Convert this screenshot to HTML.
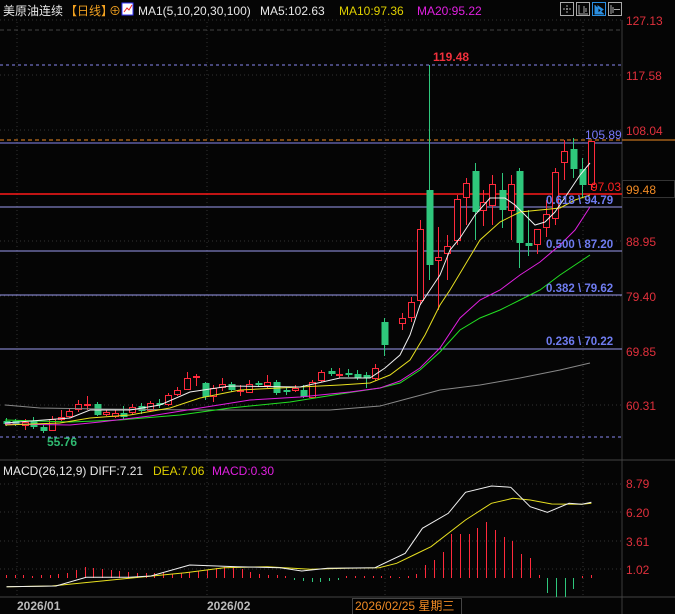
<!DOCTYPE html>
<html><head><meta charset="utf-8"><style>
html,body{margin:0;padding:0;background:#000;width:675px;height:614px;overflow:hidden}
svg{display:block}
text{font-family:"Liberation Sans","Noto Sans CJK SC",sans-serif}
</style></head><body>
<svg id="s" width="675" height="614" xmlns="http://www.w3.org/2000/svg">
<rect width="675" height="614" fill="#050505"/>
<g stroke="#333" stroke-dasharray="1,3" stroke-width="1">
<line x1="0" y1="20" x2="622" y2="20"/>
<line x1="0" y1="75" x2="622" y2="75"/>
<line x1="0" y1="130" x2="622" y2="130"/>
<line x1="0" y1="241" x2="622" y2="241"/>
<line x1="0" y1="296" x2="622" y2="296"/>
<line x1="0" y1="405" x2="622" y2="405"/>
<line x1="0" y1="484" x2="622" y2="484"/>
<line x1="0" y1="512" x2="622" y2="512"/>
<line x1="0" y1="541" x2="622" y2="541"/>
<line x1="0" y1="569" x2="622" y2="569"/>
<line x1="17" y1="22" x2="17" y2="597"/>
<line x1="207" y1="22" x2="207" y2="597"/>
<line x1="385" y1="22" x2="385" y2="597"/>
<line x1="583" y1="22" x2="583" y2="597"/>
</g>
<line x1="622" y1="20" x2="622" y2="614" stroke="#3a3a3a"/>
<line x1="0" y1="460" x2="675" y2="460" stroke="#444"/>
<line x1="0" y1="597" x2="675" y2="597" stroke="#444"/>
<line x1="0" y1="30" x2="622" y2="30" stroke="#444" stroke-dasharray="4,3"/>
<!-- key lines -->
<line x1="0" y1="65" x2="622" y2="65" stroke="#8888ee" stroke-dasharray="3,3"/>
<line x1="0" y1="140" x2="675" y2="140" stroke="#f08a24" stroke-dasharray="4,3"/>
<line x1="622" y1="140" x2="675" y2="140" stroke="#f08a24"/>
<line x1="0" y1="143" x2="622" y2="143" stroke="#8888ee"/>
<line x1="0" y1="194" x2="622" y2="194" stroke="#ff1a1a" stroke-width="1.5"/>
<line x1="0" y1="207" x2="622" y2="207" stroke="#9a9aee"/>
<line x1="0" y1="251" x2="622" y2="251" stroke="#9a9aee"/>
<line x1="0" y1="295" x2="622" y2="295" stroke="#9a9aee"/>
<line x1="0" y1="349" x2="622" y2="349" stroke="#9a9aee"/>
<line x1="0" y1="437" x2="622" y2="437" stroke="#8888ee" stroke-dasharray="3,3"/>
<g id="cnd"></g>
<g id="mas" fill="none" stroke-width="1"></g>
<g id="macd"></g>
<!-- texts -->
<g font-size="12">
<text x="3" y="15" fill="#e8e8e8">美原油连续</text>
<text x="65" y="15" fill="#f0a020">【日线】</text>
<text x="109" y="15" fill="#f0a020">⊕</text>
<rect x="122" y="3" width="11" height="12" fill="#fff" stroke="#33f"/>
<path d="M124 12 L127 8 L129 10 L132 5" stroke="#e22" fill="none"/>
<text x="138" y="15" fill="#e8e8e8">MA1(5,10,20,30,100)</text>
<text x="260" y="15" fill="#e8e8e8">MA5:102.63</text>
<text x="339" y="15" fill="#e0d000">MA10:97.36</text>
<text x="417" y="15" fill="#e020e0">MA20:95.22</text>
</g>
<g stroke="#aaa" fill="none">
<rect x="560.5" y="2.5" width="13" height="13"/>
<rect x="576.5" y="2.5" width="13" height="13"/>
<rect x="592.5" y="2.5" width="13" height="13" stroke="#2a8ee0"/>
<rect x="608.5" y="2.5" width="13" height="13"/>
<path d="M567 5v9M563 9h9" stroke-dasharray="2,1"/>
<path d="M579 5v9h9M584 6v7M586 8v4"/>
<path d="M595 5v9h9M598 6l5 3.5-5 3.5z" stroke="#2a8ee0" fill="#2a8ee0"/>
<path d="M611 5v9M613 7v6M614 9.5h6"/>
</g>
<g font-size="12" fill="#e0303c">
<text x="626" y="25">127.13</text>
<text x="626" y="80">117.58</text>
<text x="626" y="135">108.04</text>
<text x="626" y="246">88.95</text>
<text x="626" y="301">79.40</text>
<text x="626" y="356">69.85</text>
<text x="626" y="410">60.31</text>
<text x="626" y="488">8.79</text>
<text x="626" y="517">6.20</text>
<text x="626" y="546">3.61</text>
<text x="626" y="574">1.02</text>
</g>
<rect x="622.5" y="180.5" width="52" height="17" fill="#000" stroke="#333"/>
<text x="626" y="194" font-size="12" fill="#f08a24">99.48</text>
<g font-size="12" font-weight="bold">
<text x="433" y="61" fill="#f0303c">119.48</text>
<text x="47" y="446" fill="#2fb870">55.76</text>
</g>
<g font-size="12">
<text x="585" y="139" fill="#7a7aff">105.89</text>
<text x="591" y="191" fill="#ff2020">97.03</text>
</g>
<g font-size="11.5" font-weight="bold" fill="#6f7cf0">
<text x="546" y="204">0.618 \ 94.79</text>
<text x="546" y="248">0.500 \ 87.20</text>
<text x="546" y="292">0.382 \ 79.62</text>
<text x="546" y="345">0.236 \ 70.22</text>
</g>
<g font-size="12">
<text x="3" y="475" fill="#e8e8e8">MACD(26,12,9) DIFF:7.21</text>
<text x="153" y="475" fill="#e0d000">DEA:7.06</text>
<text x="212" y="475" fill="#e020e0">MACD:0.30</text>
</g>
<g font-size="12" fill="#bbb" font-weight="bold">
<text x="17" y="610">2026/01</text>
<text x="207" y="610">2026/02</text>
</g>
<rect x="352.5" y="598.5" width="109" height="16" fill="#000" stroke="#444"/>
<text x="355" y="610" font-size="12" fill="#f08a24">2026/02/25 星期三</text>
</svg>
<script>
var NS="http://www.w3.org/2000/svg";
function el(t,a,p){var e=document.createElementNS(NS,t);for(var k in a)e.setAttribute(k,a[k]);p.appendChild(e);return e;}
var R="#ff2a3c",G="#2fc77c";
// x, top, bottom, red?, wickTop, wickBot
var c=[[6,421,424,0,418,426],[15,421,424,0,419,426],[25,422,425,1,419,430],[33,421,427,0,417,429],[43,427,431,0,425,433],[52,419,430,1,416,431],[61,417,419,1,410,421],[69,411,416,1,408,418],[78,404,409,1,400,412],[87,404,405,1,396,410],[97,404,415,0,402,416],[106,412,414,1,409,416],[115,413,416,1,410,418],[123,413,417,0,406,419],[132,407,412,1,404,414],[141,406,411,0,403,414],[150,403,410,1,401,412],[159,403,405,0,399,408],[168,395,404,1,393,406],[177,390,394,1,387,396],[187,378,389,1,372,390],[196,376,377,1,374,386],[205,383,397,0,382,400],[213,388,396,1,385,402],[222,384,387,1,378,391],[231,384,390,0,382,392],[240,390,391,1,385,396],[249,384,392,1,380,393],[258,383,385,0,381,387],[267,382,385,1,375,388],[276,382,393,0,380,395],[286,390,391,0,387,395],[295,388,390,1,385,392],[303,390,397,0,385,398],[312,382,397,1,380,398],[321,372,380,1,370,382],[331,371,374,0,368,376],[339,374,375,1,368,378],[348,373,374,0,369,377],[357,374,378,0,370,380],[366,375,378,0,372,388],[375,368,378,1,364,381],[384,322,345,0,318,356],[402,318,323,1,313,330],[411,302,317,1,297,322],[420,229,300,1,220,305],[429,190,265,0,65,280],[438,257,260,1,227,310],[447,246,253,1,235,280],[457,199,240,1,195,245],[466,183,197,1,178,225],[475,171,212,0,163,240],[483,202,210,1,190,226],[492,184,205,1,175,225],[502,190,210,0,173,228],[511,184,210,1,175,240],[519,171,243,0,168,268],[528,243,246,0,210,256],[537,229,244,1,229,254],[546,214,227,1,200,237],[555,172,218,1,168,225],[564,151,162,1,140,180],[573,149,169,0,138,178],[582,169,185,0,158,198],[591,141,184,1,141,190]];
var g=document.getElementById("cnd");
c.forEach(function(d){var col=d[3]?R:G;
el("line",{x1:d[0]+.5,y1:d[4],x2:d[0]+.5,y2:d[5],stroke:col},g);
if(d[3])el("rect",{x:d[0]-2.5,y:d[1]+.5,width:6,height:Math.max(1,d[2]-d[1]),fill:"#050505",stroke:col},g);
else el("rect",{x:d[0]-2.5,y:d[1],width:7,height:Math.max(2,d[2]-d[1]),fill:col},g);});
var m=document.getElementById("mas");
function pl(pts,col,p){el("polyline",{points:pts.map(function(a){return a.join(",")}).join(" "),stroke:col,fill:"none"},p||m);}
pl([[5,405],[40,408],[100,409],[200,410],[330,410],[380,406],[410,398],[440,390],[480,385],[520,378],[560,370],[590,363]],"#888");
pl([[5,420],[70,422],[120,420],[180,415],[230,408],[290,402],[340,394],[380,388],[400,383],[420,370],[440,352],[460,330],[480,318],[500,310],[520,300],[540,290],[560,275],[590,255]],"#22e022");
pl([[5,424],[70,425],[100,422],[150,416],[200,408],[250,400],[300,397],[350,392],[380,388],[400,381],[420,368],[440,348],[460,318],[480,300],[500,290],[520,275],[540,262],[560,245],[575,230],[590,207]],"#e020e0");
pl([[5,425],[60,423],[90,418],[130,415],[170,408],[200,398],[240,390],[300,387],[340,385],[370,383],[390,375],[410,360],[425,335],[440,305],[450,290],[465,265],[480,240],[500,222],[520,212],[540,210],[560,208],[575,200],[590,195]],"#e8e020");
pl([[5,423],[70,418],[90,410],[130,410],[160,405],[190,392],[230,386],[300,387],[340,378],[370,378],[385,368],[400,355],[410,335],[420,305],[430,290],[440,275],[450,250],[460,238],[475,215],[490,198],[505,198],[515,205],[525,215],[535,225],[545,222],[555,212],[570,190],[580,175],[590,163]],"#f0f0f0");
// MACD
var mg=document.getElementById("macd");
var h={};
for(var i=0;i<68;i++){var x=Math.round(6+i*8.73);h[i]=x;}
var hv=[3,3,3,2,3,3,4,5,8,11,10,9,8,7,6,5,5,5,5,4,5,6,7,8,10,11,10,9,6,4,3,3,2,-2,-3,-4,-4,-3,-2,2,2,2,2,2,2,1,2,4,13,18,26,44,44,44,50,56,48,41,37,24,20,3,-15,-19,-19,-11,2,3];
hv.forEach(function(v,i){if(i>67)return;var x=h[i]+.5;
el("line",{x1:x,y1:578,x2:x,y2:578-v,stroke:v>=0?"#ff2a3c":"#2fc77c"},mg);});
function cv(a){return a.map(function(p){return [ (p[0]/2.32).toFixed(1),(460+p[1]/3).toFixed(1)];});}
pl(cv([[15,380],[120,378],[300,355],[430,338],[520,323],[620,320],[720,328],[800,325],[880,323],[920,310],[960,285],[1000,260],[1080,180],[1140,130],[1190,115],[1230,120],[1280,132],[1350,133],[1372,130]]),"#e8e020",mg);
pl(cv([[15,380],[130,378],[200,352],[300,352],[350,348],[440,315],[550,320],[650,323],[700,333],[760,325],[870,323],[940,280],[980,205],[1040,160],[1080,97],[1140,78],[1185,82],[1230,140],[1270,157],[1320,130],[1350,133],[1372,127]]),"#f0f0f0",mg);
</script>
</body></html>
